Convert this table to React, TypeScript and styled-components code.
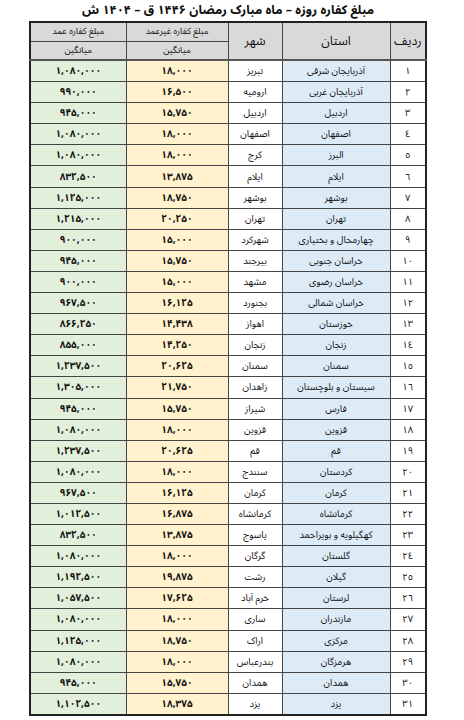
import React from "react";
import styled, { createGlobalStyle } from "styled-components";

const Global = createGlobalStyle`
  html, body { margin: 0; padding: 0; background: #ffffff; }
  body { font-family: "Noto Sans Arabic", "DejaVu Sans", sans-serif; color: #111; }
`;

const Page = styled.div`
  width: 464px;
  height: 720px;
  display: flex;
  flex-direction: column;
  align-items: center;
  padding: 0 8px 0 0;
  box-sizing: border-box;
`;

const Title = styled.h1`
  margin: 0;
  padding: 0 6px;
  font-size: 12.5px;
  font-weight: 700;
  line-height: 21px;
  direction: rtl;
  white-space: nowrap;
`;

const Table = styled.table`
  direction: rtl;
  border-collapse: collapse;
  table-layout: fixed;
  width: 396px;
  border: 2px solid #222;
`;

const HeadCell = styled.th<{ $big?: boolean; $bottom?: boolean }>`
  background: #d9d9d9;
  border: 1px solid #444;
  ${(p) => (p.$bottom ? "border-bottom: 2px solid #555;" : "")}
  font-weight: 400;
  font-size: ${(p) => (p.$big ? "12.5px" : "9px")};
  line-height: 15px;
  height: 17.5px;
  padding: 0;
  text-align: center;
  vertical-align: middle;
  white-space: nowrap;
  overflow: hidden;
`;

type Tone = "plain" | "blue" | "yellow" | "green";
const toneBg: Record<Tone, string> = {
  plain: "#ffffff",
  blue: "#ddebf7",
  yellow: "#fff2cc",
  green: "#e2efda",
};

const Cell = styled.td<{ $tone: Tone; $bold?: boolean }>`
  background: ${(p) => toneBg[p.$tone]};
  border: 1px solid #444;
  height: 20.1px;
  line-height: 12px;
  padding: 0;
  text-align: center;
  vertical-align: middle;
  font-size: ${(p) => (p.$bold ? "10px" : "9.5px")};
  font-weight: ${(p) => (p.$bold ? 700 : 400)};
  white-space: nowrap;
  overflow: hidden;
`;

const Num = styled.span`
  direction: ltr;
  unicode-bidi: isolate;
  display: inline-block;
`;

const fa = (s: string) => s.replace(/[0-9]/g, (d) => "۰۱۲۳۴۵۶۷۸۹"[+d]);
const ar = (s: string) => s.replace(/[0-9]/g, (d) => "٠١٢٣٤٥٦٧٨٩"[+d]);

const rows: [string, string, string, string][] = [
  ["آذربایجان شرقی", "تبریز", "18,000", "1,080,000"],
  ["آذربایجان غربی", "ارومیه", "16,500", "990,000"],
  ["اردبیل", "اردبیل", "15,750", "945,000"],
  ["اصفهان", "اصفهان", "18,000", "1,080,000"],
  ["البرز", "کرج", "18,000", "1,080,000"],
  ["ایلام", "ایلام", "13,875", "832,500"],
  ["بوشهر", "بوشهر", "18,750", "1,125,000"],
  ["تهران", "تهران", "20,250", "1,215,000"],
  ["چهارمحال و بختیاری", "شهرکرد", "15,000", "900,000"],
  ["خراسان جنوبی", "بیرجند", "15,750", "945,000"],
  ["خراسان رضوی", "مشهد", "15,000", "900,000"],
  ["خراسان شمالی", "بجنورد", "16,125", "967,500"],
  ["خوزستان", "اهواز", "14,438", "866,250"],
  ["زنجان", "زنجان", "14,250", "855,000"],
  ["سمنان", "سمنان", "20,625", "1,237,500"],
  ["سیستان و بلوچستان", "زاهدان", "21,750", "1,305,000"],
  ["فارس", "شیراز", "15,750", "945,000"],
  ["قزوین", "قزوین", "18,000", "1,080,000"],
  ["قم", "قم", "20,625", "1,237,500"],
  ["کردستان", "سنندج", "18,000", "1,080,000"],
  ["کرمان", "کرمان", "16,125", "967,500"],
  ["کرمانشاه", "کرمانشاه", "16,875", "1,012,500"],
  ["کهگیلویه و بویراحمد", "یاسوج", "13,875", "832,500"],
  ["گلستان", "گرگان", "18,000", "1,080,000"],
  ["گیلان", "رشت", "19,875", "1,192,500"],
  ["لرستان", "خرم آباد", "17,625", "1,057,500"],
  ["مازندران", "ساری", "18,000", "1,080,000"],
  ["مرکزی", "اراک", "18,750", "1,125,000"],
  ["هرمزگان", "بندرعباس", "18,000", "1,080,000"],
  ["همدان", "همدان", "15,750", "945,000"],
  ["یزد", "یزد", "18,375", "1,102,500"],
];

export default function App() {
  return (
    <>
      <Global />
      <Page>
        <Title>مبلغ کفاره روزه – ماه مبارک رمضان ۱۴۴۶ ق – ۱۴۰۴ ش</Title>
        <Table>
          <colgroup>
            <col style={{ width: 36 }} />
            <col style={{ width: 108 }} />
            <col style={{ width: 54 }} />
            <col style={{ width: 102 }} />
            <col style={{ width: 96 }} />
          </colgroup>
          <thead>
            <tr>
              <HeadCell $big $bottom rowSpan={2}>ردیف</HeadCell>
              <HeadCell $big $bottom rowSpan={2}>استان</HeadCell>
              <HeadCell $big $bottom rowSpan={2}>شهر</HeadCell>
              <HeadCell>مبلغ کفاره غیرعمد</HeadCell>
              <HeadCell>مبلغ کفاره عمد</HeadCell>
            </tr>
            <tr>
              <HeadCell $bottom>میانگین</HeadCell>
              <HeadCell $bottom>میانگین</HeadCell>
            </tr>
          </thead>
          <tbody>
            {rows.map((r, i) => (
              <tr key={i}>
                <Cell $tone="plain">{ar(String(i + 1))}</Cell>
                <Cell $tone="blue">{r[0]}</Cell>
                <Cell $tone="plain">{r[1]}</Cell>
                <Cell $tone="yellow" $bold>
                  <Num>{fa(r[2])}</Num>
                </Cell>
                <Cell $tone="green" $bold>
                  <Num>{fa(r[3])}</Num>
                </Cell>
              </tr>
            ))}
          </tbody>
        </Table>
      </Page>
    </>
  );
}
